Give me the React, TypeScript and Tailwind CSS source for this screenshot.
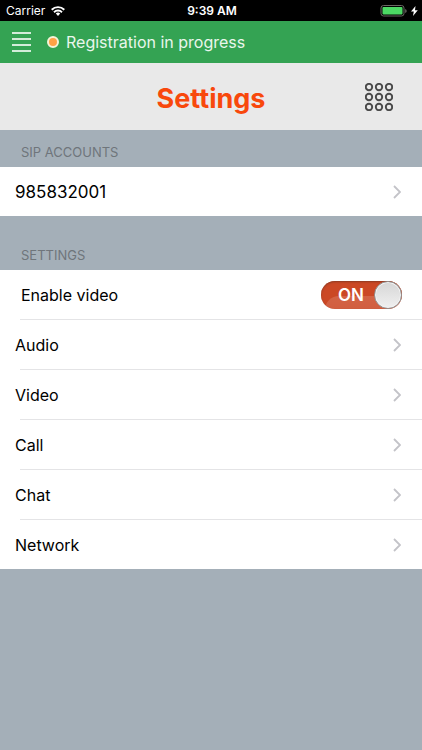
import { useState } from "react";

const accounts = ["985832001"];
const sections = ["Audio", "Video", "Call", "Chat", "Network"];

function StatusBar() {
  return (
    <div className="grid h-[21px] grid-cols-3 items-center bg-black pr-1 pl-1.5 text-white">
      <div className="flex items-center gap-1.5 text-[12px] leading-none">
        <span>Carrier</span>
        <svg viewBox="0 0 14 10" className="h-[10px] w-[14px]" fill="none" stroke="currentColor" strokeWidth="1.9" aria-hidden="true">
          <path d="M0.7 3.7a9 9 0 0 1 12.6 0" />
          <path d="M3 6.2a5.7 5.7 0 0 1 8 0" />
          <path d="M4.8 7.6a3.2 3.2 0 0 1 4.4 0L7 10z" fill="currentColor" stroke="none" />
        </svg>
      </div>
      <div className="text-center text-[12px] leading-none font-semibold">9:39 AM</div>
      <div className="flex items-center justify-end gap-1">
        <svg viewBox="0 0 27 12" className="h-[12px] w-[27px]" aria-hidden="true">
          <rect x="1" y="0.5" width="23" height="10.5" rx="2.5" fill="none" stroke="#6b6864" />
          <rect x="2.500" y="2" width="20" height="7.5" rx="1" fill="#4cd964" />
          <path d="M25.300 4v4q1.300-.6 1.300-2T25.300 4z" fill="#7d7a76" />
        </svg>
        <svg viewBox="0 0 7 10" className="h-[10px] w-[7px]" fill="currentColor" aria-hidden="true">
          <path d="M4.500 0 0 5.600h2.800L2 10l4.800-5.700H4z" />
        </svg>
      </div>
    </div>
  );
}

function Chevron() {
  return (
    <svg viewBox="0 0 8 14" className="h-[14px] w-[8px]" fill="none" stroke="#c3c3c8" strokeWidth="1.800" aria-hidden="true">
      <path d="M1 1l6 6-6 6" />
    </svg>
  );
}

function SectionLabel({ children }: { children: string }) {
  return <h2 className="px-[21px] pb-2 text-[13px] leading-[14px] text-[#6f757b]">{children}</h2>;
}

function NavRow({ label, size = "text-[16px]", divided }: { label: string; size?: string; divided?: boolean }) {
  return (
    <li>
      {divided && <div className="ml-5 h-px bg-[#e4e4e6]" />}
      <button className={`flex h-[49px] w-full items-center justify-between pr-[21px] pl-[15px] text-left text-black ${size}`}>
        <span className="leading-6">{label}</span>
        <Chevron />
      </button>
    </li>
  );
}

function Dialpad() {
  return (
    <svg viewBox="0 0 28 28" className="h-[28px] w-[28px]" fill="none" stroke="#4a4a4a" strokeWidth="1.900" aria-hidden="true">
      {[4, 14, 24].map((y) => [4, 14, 24].map((x) => <circle key={`${x}-${y}`} cx={x} cy={y} r="3.200" />))}
    </svg>
  );
}

function VideoSwitch() {
  const [on, setOn] = useState(true);
  return (
    <span className="relative flex h-[28px] w-[81px]">
      <input
        id="video"
        type="checkbox"
        role="switch"
        checked={on}
        onChange={(e) => setOn(e.target.checked)}
        className="peer absolute inset-0 z-10 h-full w-full cursor-pointer opacity-0"
      />
      <span className="relative flex w-full items-center justify-end overflow-hidden rounded-full bg-[#cb4825] pr-[38px] text-[17px] leading-7 font-semibold text-white shadow-[inset_0_1px_2px_#8c3a22] peer-not-checked:bg-gray-400 peer-not-checked:pr-2 peer-not-checked:shadow-none">
        <span className="absolute top-[15px] right-0 left-1 h-[26px] rounded-tl-[14px] bg-linear-to-b from-white/15 to-white/10" />
        <span className="relative">{on ? "ON" : "OFF"}</span>
      </span>
      <span className="absolute top-0 right-0 size-[28px] rounded-full border border-[#929292] bg-linear-to-b from-[#d6d6d6] to-[#f0f0f0] shadow-[inset_0_0_0_1px_#f4f4f4] peer-not-checked:right-auto peer-not-checked:left-0" />
    </span>
  );
}

export default function App() {
  return (
    <div className="min-h-screen bg-[#a4afb8] font-['Inter','Liberation_Sans',sans-serif]">
      <StatusBar />
      <div className="flex h-[42px] items-center bg-[#34a353] pl-3 text-white">
        <button aria-label="Menu" className="flex w-[19px] flex-col gap-1">
          <span className="h-[2px] bg-[#d3ecd9]" />
          <span className="h-[2px] bg-[#d3ecd9]" />
          <span className="h-[2px] bg-[#d3ecd9]" />
          <span className="h-[2px] bg-[#d3ecd9]" />
        </button>
        <span className="ml-4 size-3 rounded-full border-2 border-[#f5f3d8] bg-[#ffa245]" />
        <span className="ml-[7px] text-[16px] text-[#e9f6ec]">Registration in progress</span>
      </div>
      <header className="grid h-[67px] grid-cols-[1fr_auto_1fr] items-center bg-[#e9e9e9] px-[29px]">
        <h1 className="col-start-2 pt-1 text-[27px] leading-9 font-bold text-[#f8480c]">Settings</h1>
        <button aria-label="Dialpad" className="justify-self-end">
          <Dialpad />
        </button>
      </header>
      <main>
        <section className="pt-[15px]">
          <SectionLabel>SIP ACCOUNTS</SectionLabel>
          <ul className="bg-white">
            {accounts.map((a) => (
              <NavRow key={a} label={a} size="text-[17px]" />
            ))}
          </ul>
        </section>
        <section className="pt-8">
          <SectionLabel>SETTINGS</SectionLabel>
          <ul className="bg-white">
            <li className="flex h-[49px] items-center justify-between pr-5 pl-[21px] text-[16px]">
              <label htmlFor="video">Enable video</label>
              <VideoSwitch />
            </li>
            {sections.map((s) => (
              <NavRow key={s} label={s} divided />
            ))}
          </ul>
        </section>
      </main>
    </div>
  );
}
